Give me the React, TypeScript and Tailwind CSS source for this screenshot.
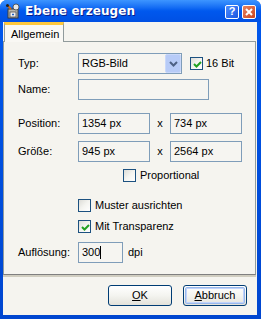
import React from "react";

const font = { fontFamily: '"Liberation Sans", Arial, sans-serif' };

function CheckBox({ checked }: { checked?: boolean }) {
  return (
    <span className="relative w-[13px] h-[13px] border border-[#1c5180] bg-gradient-to-br from-[#dcdcd7] via-[#f4f4f0] to-white shrink-0">
      {checked && (
        <svg className="absolute left-[1px] top-[1px]" width="11" height="11" viewBox="0 0 11 11">
          <path d="M2 5 L4.5 7.5 L9 3" stroke="#21a121" strokeWidth="2" fill="none" />
        </svg>
      )}
    </span>
  );
}

function Field({ w, children }: { w: string; children?: React.ReactNode }) {
  return (
    <div className={`${w} h-[21px] border border-[#7f9db9] bg-[#f6f5f1] flex items-center pl-[3px] text-[11px] text-black`}>
      {children}
    </div>
  );
}

function XPButton({ children, def }: { children: React.ReactNode; def?: boolean }) {
  return (
    <div className="w-[64px] h-[21px] rounded-[3px] border border-[#003c74] bg-gradient-to-b from-white via-[#f4f4f0] to-[#e3e2da] p-[1px]">
      <div
        className={`w-full h-full rounded-[2px] flex items-center justify-center text-[11px] text-black ${
          def ? "border border-[#98b8ea] shadow-[inset_0_0_0_1px_#c1d3fb]" : ""
        }`}
      >
        {children}
      </div>
    </div>
  );
}

export default function App() {
  return (
    <div
      className="w-[261px] h-[319px] flex flex-col rounded-t-[7px] bg-gradient-to-b from-[#0058ee] to-[#0046d0] overflow-hidden"
      style={font}
    >
      {/* Title bar */}
      <div className="h-[22px] flex items-center pl-[5px] pr-[5px] bg-gradient-to-b from-[#3d95ff] via-[#0058ee] to-[#0050e4]">
        <svg width="16" height="16" viewBox="0 0 16 16" className="shrink-0">
          <rect x="3" y="6" width="10" height="9" fill="#b8b8b0" stroke="#3a3a3a" strokeWidth="1" />
          <rect x="5" y="9" width="6" height="5" fill="#f0f0f0" stroke="#505050" strokeWidth="0.8" />
          <path d="M7 11.5 H9 M8 10.5 V12.5" stroke="#2060c0" strokeWidth="1" />
          <circle cx="11" cy="4" r="3" fill="#e8e8e8" stroke="#404040" strokeWidth="0.8" />
          <path d="M2 2 L6 6" stroke="#d06a10" strokeWidth="2" />
          <circle cx="2.5" cy="2.5" r="1.5" fill="#202020" />
        </svg>
        <span
          className="ml-[4px] text-white font-bold text-[12.5px] tracking-[0.1px] [text-shadow:1px_1px_0_#0a1e8c]"
          style={{ fontFamily: '"DejaVu Sans", "Liberation Sans", sans-serif', fontSize: "12px" }}
        >
          Ebene erzeugen
        </span>
        <div className="ml-auto flex gap-[3px] mt-[1px]">
          <div className="w-[14px] h-[14px] rounded-[2px] border border-white bg-gradient-to-br from-[#4d8cff] to-[#1955e0] flex items-center justify-center text-white font-bold text-[11px] leading-none">
            ?
          </div>
          <div className="w-[14px] h-[14px] rounded-[2px] border border-white bg-gradient-to-br from-[#e8835f] to-[#c9431c] flex items-center justify-center">
            <svg width="8" height="8" viewBox="0 0 8 8">
              <path d="M1 1 L7 7 M7 1 L1 7" stroke="white" strokeWidth="2" />
            </svg>
          </div>
        </div>
      </div>

      {/* Client area */}
      <div className="flex-1 ml-[3px] mr-[4px] mb-[4px] bg-[#f5f4ef] flex flex-col">
        {/* Tabs */}
        <div className="h-[19px] flex pl-[1px]">
          <div className="w-[60px] h-[20px] relative z-10 bg-[#f9f8f4] border-x border-[#919b9c] border-t-[3px] border-t-[#ffc83c] flex items-start pl-[6px] pt-[1px] text-[11px] text-black">
            Allgemein
          </div>
        </div>
        <div className="ml-[0px] mr-[1px] h-[234px] border border-[#919b9c] border-b-[#7f7f7f] bg-[#f5f4ef] flex flex-col pl-[14px] text-[11px] text-black shadow-[0_2px_0_#d0cdc0]">
          {/* Typ */}
          <div className="mt-[11px] flex items-center">
            <span className="w-[60px]">Typ:</span>
            <div className="w-[104px] h-[21px] border border-[#7f9db9] bg-[#f6f5f1] flex items-center pl-[3px]">
              <span className="flex-1">RGB-Bild</span>
              <div className="w-[16px] h-[19px] mr-0 rounded-[2px] bg-[#b7cbf7] border border-[#c9d8fa] flex items-center justify-center">
                <svg width="9" height="6" viewBox="0 0 9 6">
                  <path d="M1 1 L4.5 4.5 L8 1" stroke="#4d6185" strokeWidth="2" fill="none" />
                </svg>
              </div>
            </div>
            <span className="ml-[8px] flex items-center">
              <CheckBox checked />
              <span className="ml-[3px]">16 Bit</span>
            </span>
          </div>
          {/* Name */}
          <div className="mt-[5px] flex items-center">
            <span className="w-[60px]">Name:</span>
            <Field w="w-[131px]" />
          </div>
          {/* Position */}
          <div className="mt-[13px] flex items-center">
            <span className="w-[60px]">Position:</span>
            <Field w="w-[72px]">1354 px</Field>
            <span className="w-[20px] text-center">x</span>
            <Field w="w-[72px]">734 px</Field>
          </div>
          {/* Größe */}
          <div className="mt-[7px] flex items-center">
            <span className="w-[60px]">Größe:</span>
            <Field w="w-[72px]">945 px</Field>
            <span className="w-[20px] text-center">x</span>
            <Field w="w-[72px]">2564 px</Field>
          </div>
          {/* Proportional */}
          <div className="mt-[7px] flex items-center pl-[105px] h-[13px]">
            <CheckBox />
            <span className="ml-[4px]">Proportional</span>
          </div>
          {/* Muster */}
          <div className="mt-[17px] flex items-center pl-[60px] h-[13px]">
            <CheckBox />
            <span className="ml-[4px]">Muster ausrichten</span>
          </div>
          {/* Mit Transparenz */}
          <div className="mt-[8px] flex items-center pl-[60px] h-[13px]">
            <CheckBox checked />
            <span className="ml-[4px]">Mit Transparenz</span>
          </div>
          {/* Auflösung */}
          <div className="mt-[9px] flex items-center">
            <span className="w-[60px]">Auflösung:</span>
            <Field w="w-[45px]">
              <span>300</span>
              <span className="w-[1px] h-[13px] bg-black" />
            </Field>
            <span className="ml-[5px]">dpi</span>
          </div>
        </div>
        {/* Buttons */}
        <div className="mt-[10px] flex justify-end gap-[11px] pr-[10px]">
          <XPButton>
            <span><u>O</u>K</span>
          </XPButton>
          <XPButton def>
            <span><u>A</u>bbruch</span>
          </XPButton>
        </div>
      </div>
    </div>
  );
}
